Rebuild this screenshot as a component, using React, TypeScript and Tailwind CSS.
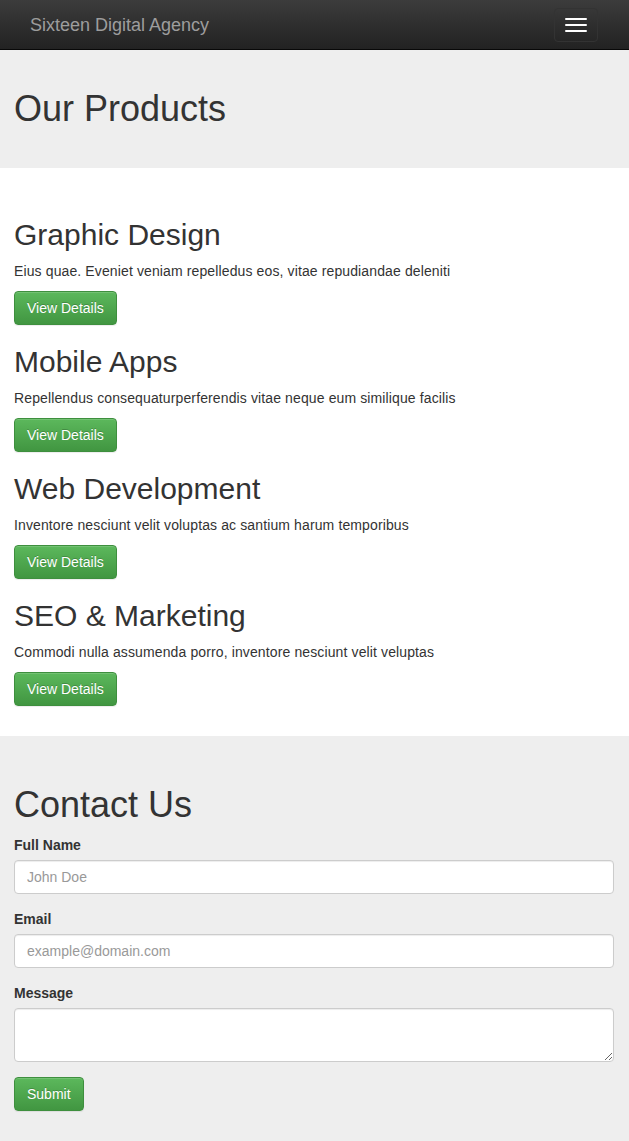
import React from "react";

const products = [
  { title: "Graphic Design", text: "Eius quae. Eveniet veniam repelledus eos, vitae repudiandae deleniti" },
  { title: "Mobile Apps", text: "Repellendus consequaturperferendis vitae neque eum similique facilis" },
  { title: "Web Development", text: "Inventore nesciunt velit voluptas ac santium harum temporibus" },
  { title: "SEO & Marketing", text: "Commodi nulla assumenda porro, inventore nesciunt velit veluptas" },
];

function GreenButton({ children }: { children: React.ReactNode }) {
  return (
    <button
      type="button"
      className="inline-block h-[34px] px-[12px] rounded-[4px] border border-[#3e8f3e] bg-gradient-to-b from-[#5cb85c] to-[#419641] text-white text-[14px] leading-[20px] [font-family:Liberation_Sans,Arial,sans-serif] [text-shadow:0_-1px_0_rgba(0,0,0,0.2)] shadow-[inset_0_1px_0_rgba(255,255,255,0.15),0_1px_1px_rgba(0,0,0,0.075)]"
    >
      {children}
    </button>
  );
}

const inputCls =
  "h-[34px] w-full px-[12px] bg-white border border-[#cccccc] rounded-[4px] text-[14px] [font-family:Liberation_Sans,Arial,sans-serif] text-[#555555] placeholder:text-[#999999] shadow-[inset_0_1px_1px_rgba(0,0,0,0.075)] outline-none";

export default function App() {
  return (
    <div className="min-h-[1141px] bg-[#eeeeee] text-[#333333] [font-family:Liberation_Sans,Arial,sans-serif] text-[14px] leading-[20px]">
      {/* Navbar */}
      <nav className="h-[50px] bg-gradient-to-b from-[#3c3c3c] to-[#222222] border-b border-[#080808] flex items-start justify-between px-[15px]">
        <span className="h-[49px] px-[15px] flex items-center text-[18px] leading-[20px] text-[#9d9d9d]">
          Sixteen Digital Agency
        </span>
        <button
          type="button"
          className="mt-[8px] mr-[16px] w-[44px] h-[34px] rounded-[4px] border border-[#333333] flex flex-col items-center justify-center gap-[4px]"
        >
          <span className="block w-[22px] h-[2px] rounded-[1px] bg-white" />
          <span className="block w-[22px] h-[2px] rounded-[1px] bg-white" />
          <span className="block w-[22px] h-[2px] rounded-[1px] bg-white" />
        </button>
      </nav>

      {/* Hero */}
      <section className="bg-[#eeeeee] px-[14px] h-[118px] pt-[39px]">
        <h1 className="text-[36px] leading-[39.6px] font-normal">Our Products</h1>
      </section>

      {/* Products */}
      <section className="bg-white px-[14px] pt-[30px] pb-[30px]">
        {products.map((p) => (
          <div key={p.title}>
            <h2 className="mt-[20px] mb-[10px] text-[30px] leading-[33px] font-normal">{p.title}</h2>
            <p className="mb-[10px] tracking-[0.12px]">{p.text}</p>
            <GreenButton>View Details</GreenButton>
          </div>
        ))}
      </section>

      {/* Contact */}
      <section className="bg-[#eeeeee] pl-[14px] pr-[15px] pt-[30px] pb-[30px]">
        <h1 className="mt-[19px] mb-[10px] text-[36px] leading-[39.6px] font-normal">Contact Us</h1>
        <form className="flex flex-col">
          <div className="mb-[15px] flex flex-col">
            <label className="mb-[5px] font-bold">Full Name</label>
            <input type="text" placeholder="John Doe" className={inputCls} />
          </div>
          <div className="mb-[15px] flex flex-col">
            <label className="mb-[5px] font-bold">Email</label>
            <input type="email" placeholder="example@domain.com" className={inputCls} />
          </div>
          <div className="mb-[15px] flex flex-col">
            <label className="mb-[5px] font-bold">Message</label>
            <textarea
              rows={2}
              className="h-[54px] w-full px-[12px] py-[6px] bg-white border border-[#cccccc] rounded-[4px] text-[14px] leading-[20px] [font-family:Liberation_Sans,Arial,sans-serif] text-[#555555] shadow-[inset_0_1px_1px_rgba(0,0,0,0.075)] outline-none resize-y"
            />
          </div>
          <div>
            <GreenButton>Submit</GreenButton>
          </div>
        </form>
      </section>
    </div>
  );
}
